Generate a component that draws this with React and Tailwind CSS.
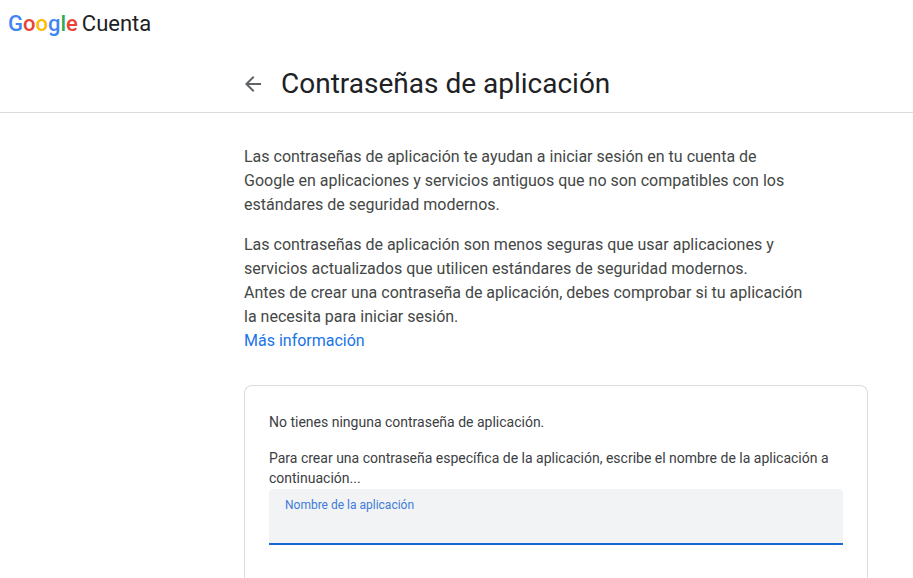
import { useState } from "react";

/* ── Brand wordmark ──────────────────────────────────────────── */
const wordmark = [
  { letter: "G", color: "text-[#4285f4]" },
  { letter: "o", color: "text-[#ea4335]" },
  { letter: "o", color: "text-[#fbbc04]" },
  { letter: "g", color: "text-[#4285f4]" },
  { letter: "l", color: "text-[#34a853]" },
  { letter: "e", color: "text-[#ea4335]" },
];

function Brand() {
  return (
    <a href="#" className="flex items-center gap-1 text-[22px] leading-6 text-[#202124]">
      <span className="font-medium">
        {wordmark.map(({ letter, color }, i) => (
          <span key={i} className={color}>{letter}</span>
        ))}
      </span>
      <span>Cuenta</span>
    </a>
  );
}

/* ── Page heading ────────────────────────────────────────────── */
function PageHeader() {
  return (
    <header className="border-b border-[#dadce0]">
      <div className="px-2 pt-3">
        <Brand />
      </div>
      <div className="flex items-center gap-4 pl-[241px] pr-6 pt-7 pb-2">
        <button type="button" aria-label="Atrás" className="text-[#5f6368]">
          <svg viewBox="0 0 24 24" className="size-6" fill="currentColor">
            <path d="M20 11H7.83l5.59-5.59L12 4l-8 8 8 8 1.41-1.41L7.83 13H20v-2z" />
          </svg>
        </button>
        <h1 className="text-[28px] leading-10 text-[#202124]">Contraseñas de aplicación</h1>
      </div>
    </header>
  );
}

/* ── Intro copy ──────────────────────────────────────────────── */
function Intro() {
  return (
    <div className="flex max-w-[560px] flex-col gap-4 text-base leading-6 text-[#444746]">
      <p>
        Las contraseñas de aplicación te ayudan a iniciar sesión en tu cuenta de
        Google en aplicaciones y servicios antiguos que no son compatibles con los
        estándares de seguridad modernos.
      </p>
      <p>
        Las contraseñas de aplicación son menos seguras que usar aplicaciones y
        servicios actualizados que utilicen estándares de seguridad modernos.
        <br />
        Antes de crear una contraseña de aplicación, debes comprobar si tu
        aplicación la necesita para iniciar sesión.
        <br />
        <a href="#" className="text-[#1a73e8]">Más información</a>
      </p>
    </div>
  );
}

/* ── App password form ───────────────────────────────────────── */
function PasswordCard() {
  const [name, setName] = useState("");
  return (
    <section className="max-w-[624px] rounded-lg border border-b-0 rounded-b-none border-[#dadce0] px-6 pt-[26px] pb-24 text-sm leading-5 text-[#3c4043]">
      <p>No tienes ninguna contraseña de aplicación.</p>
      <p className="mt-4">
        Para crear una contraseña específica de la aplicación, escribe el nombre de la aplicación
        a continuación...
      </p>
      <div className="mt-px rounded-t border-b-2 border-[#1967d2] bg-[#f1f3f4] px-4 pt-2">
        <label htmlFor="app-name" className="block text-xs leading-4 text-[#3f7cd8]">
          Nombre de la aplicación
        </label>
        <input
          id="app-name"
          type="text"
          value={name}
          onChange={(e) => setName(e.target.value)}
          className="block h-[30px] w-full bg-transparent text-base outline-none"
        />
      </div>
    </section>
  );
}

export default function App() {
  return (
    <div className="h-screen overflow-hidden bg-white font-['Roboto',sans-serif]">
      <PageHeader />
      <main className="flex flex-col gap-8 pl-[244px] pr-[45px] pt-8">
        <Intro />
        <PasswordCard />
      </main>
    </div>
  );
}
